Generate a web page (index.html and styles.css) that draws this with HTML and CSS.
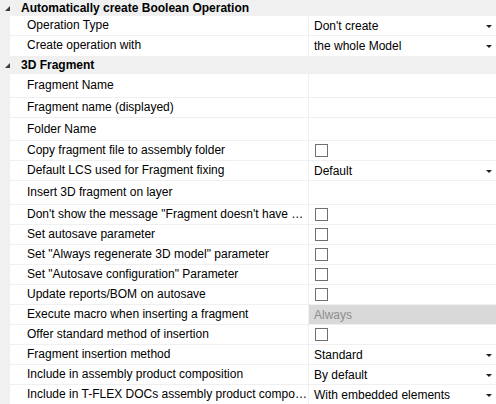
FILE: index.html
```html
<!DOCTYPE html>
<html>
<head>
<meta charset="utf-8">
<link rel="stylesheet" href="styles.css">
</head>
<body>
<div class="grid">
  <div class="group"><span class="exp"></span><span class="gtitle">Automatically create Boolean Operation</span></div>
  <div class="row"><div class="name">Operation Type</div><div class="val">Don't create<span class="dd"></span></div></div>
  <div class="row last"><div class="name">Create operation with</div><div class="val">the whole Model<span class="dd"></span></div></div>
  <div class="group g2"><span class="exp"></span><span class="gtitle">3D Fragment</span></div>
  <div class="row h24"><div class="name">Fragment Name</div><div class="val"></div></div>
  <div class="row"><div class="name">Fragment name (displayed)</div><div class="val"></div></div>
  <div class="row h23"><div class="name">Folder Name</div><div class="val"></div></div>
  <div class="row"><div class="name">Copy fragment file to assembly folder</div><div class="val"><span class="cb"></span></div></div>
  <div class="row"><div class="name">Default LCS used for Fragment fixing</div><div class="val">Default<span class="dd"></span></div></div>
  <div class="row h24"><div class="name">Insert 3D fragment on layer</div><div class="val"></div></div>
  <div class="row"><div class="name">Don't show the message "Fragment doesn't have Boolean operation"</div><div class="val"><span class="cb"></span></div></div>
  <div class="row"><div class="name">Set autosave parameter</div><div class="val"><span class="cb"></span></div></div>
  <div class="row"><div class="name">Set "Always regenerate 3D model" parameter</div><div class="val"><span class="cb"></span></div></div>
  <div class="row"><div class="name">Set "Autosave configuration" Parameter</div><div class="val"><span class="cb"></span></div></div>
  <div class="row"><div class="name">Update reports/BOM on autosave</div><div class="val"><span class="cb"></span></div></div>
  <div class="row"><div class="name">Execute macro when inserting a fragment</div><div class="val disabled">Always</div></div>
  <div class="row"><div class="name">Offer standard method of insertion</div><div class="val"><span class="cb"></span></div></div>
  <div class="row"><div class="name">Fragment insertion method</div><div class="val">Standard<span class="dd"></span></div></div>
  <div class="row"><div class="name">Include in assembly product composition</div><div class="val">By default<span class="dd"></span></div></div>
  <div class="row"><div class="name">Include in T-FLEX DOCs assembly product composition</div><div class="val">With embedded elements<span class="dd"></span></div></div>
</div>
</body>
</html>
```

FILE: styles.css
```css
html, body {
  margin: 0;
  padding: 0;
  background: #ffffff;
}
body {
  font-family: "Liberation Sans", Arial, sans-serif;
  font-size: 12px;
  color: #000;
  width: 496px;
  height: 404px;
  overflow: hidden;
}
.grid {
  display: flex;
  flex-direction: column;
}
.group {
  display: flex;
  align-items: center;
  height: 16px;
  background: #f0f0f0;
}
.group.g2 {
  height: 18px;
}
.exp {
  width: 0;
  height: 0;
  margin-left: 5px;
  margin-right: 11px;
  margin-top: 1px;
  border-left: 5px solid transparent;
  border-bottom: 5px solid #3c3c3c;
}
.gtitle {
  font-weight: bold;
  white-space: nowrap;
}
.row {
  display: flex;
  height: 20px;
  box-sizing: border-box;
  border-left: 10px solid #f0f0f0;
  border-bottom: 1px solid #f0f0f0;
}
.row.last {
  border-bottom: none;
}
.row.h24 { height: 24px; }
.row.h23 { height: 23px; }
.name {
  width: 281px;
  flex: none;
  padding-left: 17px;
  display: block;
  line-height: 19px;
  white-space: nowrap;
  overflow: hidden;
  text-overflow: ellipsis;
  border-right: 1px solid #f0f0f0;
}
.row.h24 .name { line-height: 23px; }
.row.h23 .name { line-height: 22px; }
.val {
  flex: 1;
  display: flex;
  align-items: center;
  padding-left: 5px;
  padding-right: 4px;
  white-space: nowrap;
}
.val.disabled {
  background: #d9d9d9;
  color: #8c8c8c;
}
.dd {
  margin-left: auto;
  width: 0;
  height: 0;
  border-left: 3px solid transparent;
  border-right: 3px solid transparent;
  border-top: 3px solid #222;
  margin-top: 1px;
}
.cb {
  width: 13px;
  height: 13px;
  box-sizing: border-box;
  border: 1px solid #707070;
  background: #fff;
  margin-left: 1px;
}
```
